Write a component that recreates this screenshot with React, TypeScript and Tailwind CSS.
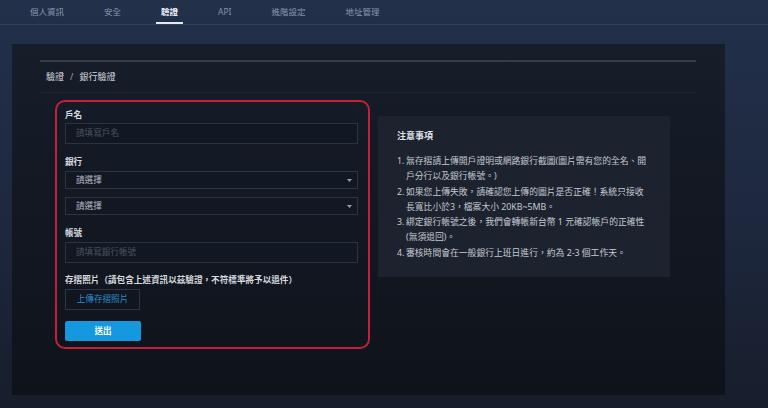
import React from "react";

const TABS = ["個人資訊", "安全", "驗證", "API", "進階設定", "地址管理"];
const ACTIVE_TAB = "驗證";

const NOTES: string[][] = [
  ["無存摺請上傳開戶證明或網路銀行截圖(圖片需有您的全名、開", "戶分行以及銀行帳號。)"],
  ["如果您上傳失敗，請確認您上傳的圖片是否正確！系統只接收", "長寬比小於3，檔案大小 20KB~5MB。"],
  ["綁定銀行帳號之後，我們會轉帳新台幣 1 元確認帳戶的正確性", "(無須退回)。"],
  ["審核時間會在一般銀行上班日進行，約為 2-3 個工作天。"],
];

function Label({ children, className = "" }: { children: React.ReactNode; className?: string }) {
  return (
    <div className={`h-[12px] text-[8.6px] font-semibold leading-[12px] text-[#d6d9df] ${className}`}>
      {children}
    </div>
  );
}

function TextInput({ placeholder }: { placeholder: string }) {
  return (
    <div className="flex h-[21px] items-center border border-[#2b3241] bg-[#121822] px-[10px] text-[8.6px] text-[#4a5261]">
      {placeholder}
    </div>
  );
}

function SelectBox() {
  return (
    <div className="flex h-[18px] items-center justify-between border border-[#2b3241] bg-[#121822] pl-[10px] pr-[5px] text-[8.6px] text-[#b9bec8]">
      <span>請選擇</span>
      <svg width="5" height="3" viewBox="0 0 5 3" className="mt-[1px]">
        <path d="M0 0h5L2.5 3z" fill="#9aa1ad" />
      </svg>
    </div>
  );
}

export default function App() {
  return (
    <div className="h-[408px] w-[768px] overflow-hidden bg-gradient-to-b from-[#22304a] via-[#1e2940] to-[#171d2b] font-['Noto_Sans','Noto_Sans_CJK_TC',sans-serif]">
      <nav className="flex h-[25px] items-stretch gap-[30px] border-b border-[#33415b] pl-[25px]">
        {TABS.map((tab) => (
          <div
            key={tab}
            className={`flex items-center border-b-2 px-[5px] pt-[2px] text-[8.5px] ${
              tab === ACTIVE_TAB
                ? "border-[#e6e9ef] font-semibold text-[#eef0f4]"
                : "border-transparent text-[#8c96a9]"
            }`}
          >
            {tab}
          </div>
        ))}
      </nav>

      <div className="px-[12px] pt-[19px]">
        <div className="h-[351px] w-[713px] bg-gradient-to-b from-[#171d29] to-[#0e131b] px-[28px] pt-[16px]">
          <div className="h-[2px] w-[656px] bg-[#363d4a]" />
          <div className="flex h-[31px] w-[656px] items-center border-b border-[#1f2531] pl-[6px] text-[9px] text-[#d3d7de]">
            驗證<span className="mx-[6px] text-[#9aa1ad]">/</span>銀行驗證
          </div>

          <div className="flex gap-[8px] pl-[15px] pt-[7px]">
            <div className="w-[315px] rounded-[10px] border-2 border-[#c42038] px-[8px] pt-[7px] pb-[6px] pr-[10px]">
              <Label className="mb-[2px]">戶名</Label>
              <TextInput placeholder="請填寫戶名" />

              <Label className="mt-[12px] mb-[3px]">銀行</Label>
              <SelectBox />
              <div className="mt-[8px]">
                <SelectBox />
              </div>

              <Label className="mt-[12px] mb-[3px]">帳號</Label>
              <TextInput placeholder="請填寫銀行帳號" />

              <Label className="mt-[11px] mb-[3px]">存摺照片（請包含上述資訊以茲驗證，不符標準將予以退件）</Label>
              <div className="flex h-[21px] w-[75px] items-center justify-center border border-[#2b3545] text-[8.6px] text-[#2a8fd0]">
                上傳存摺照片
              </div>

              <div className="mt-[11px] flex h-[20px] w-[76px] items-center justify-center rounded-[2px] bg-[#1598de] text-[8.6px] font-semibold text-white">
                送出
              </div>
            </div>

            <div className="mt-[16px] h-[161px] w-[292px] bg-[#1d232e] px-[19px] pt-[13px]">
              <div className="h-[14px] text-[9px] font-semibold leading-[14px] text-[#dfe2e7]">注意事項</div>
              <ol className="mt-[11px] text-[8.8px] leading-[15.3px] text-[#c3c8d0]">
                {NOTES.map((lines, i) => (
                  <li key={i} className="flex">
                    <span className="w-[9px] shrink-0">{i + 1}.</span>
                    <div className="whitespace-nowrap">
                      {lines.map((line) => (
                        <span key={line} className="block">
                          {line}
                        </span>
                      ))}
                    </div>
                  </li>
                ))}
              </ol>
            </div>
          </div>
        </div>
      </div>
    </div>
  );
}
